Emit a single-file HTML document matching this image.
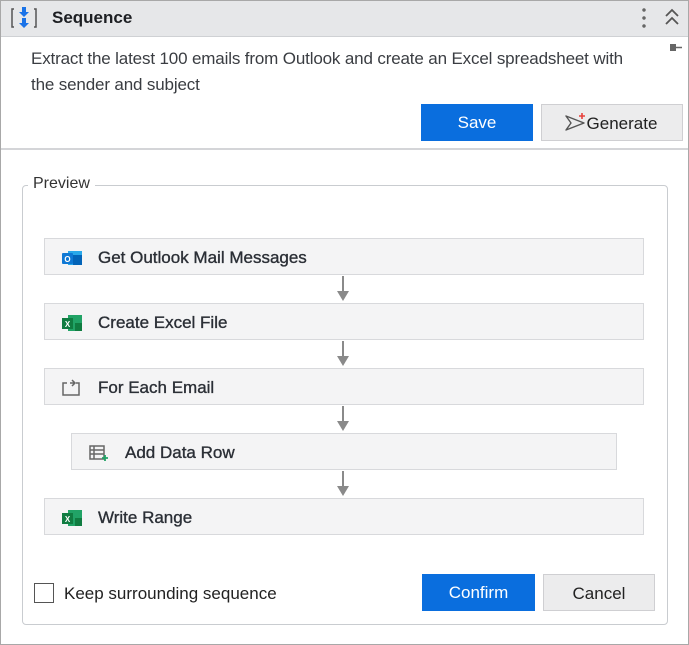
<!DOCTYPE html>
<html><head><style>
*{box-sizing:border-box;margin:0;padding:0}
body{width:689px;height:645px;background:#fff;font-family:"Liberation Sans",sans-serif;position:relative;overflow:hidden}
.abs{position:absolute}
.frame{left:0;top:0;width:689px;height:645px;border:1px solid #a8a8a8}
.hdr{left:1px;top:1px;width:687px;height:36px;background:#e6e7e9;border-bottom:1px solid #cfd1d4}
.step{position:absolute;height:37px;background:#f4f4f5;border:1px solid #d8d9dc;font-size:17px;color:#2b2f36;line-height:37px;padding-left:53px;-webkit-text-stroke:0.35px #2b2f36}
.step svg{position:absolute;left:16px;top:9px}
.arr{position:absolute;left:342px;width:2px;background:#8a8a8a}
.tri{position:absolute;left:337px;width:0;height:0;border-left:6px solid transparent;border-right:6px solid transparent;border-top:10px solid #8a8a8a}
.btn{position:absolute;height:37px;font-size:17px;text-align:center;line-height:37px}
</style></head><body>
<div class="abs frame"></div>
<div class="abs hdr"></div>
<svg class="abs" style="left:10px;top:6px" width="28" height="24" viewBox="0 0 28 24"><path d="M4 3H2v18h2M24 3h2v18h-2" stroke="#555" stroke-width="1.5" fill="none"/><path d="M12 1h4v5h3l-5 5-5-5h3z M12 12h4v5h3l-5 5-5-5h3z" fill="#1a73e8"/></svg>
<div class="abs" style="left:52px;top:8px;font-size:17px;font-weight:bold;color:#1d1f23">Sequence</div>
<div class="abs" style="left:642px;top:6px;width:4px;height:24px;background:radial-gradient(circle,#666 1.5px,transparent 2px) 0 0/4px 8px"></div>
<svg class="abs" style="left:664px;top:8px" width="16" height="18"><path d="M2 8l6-6 6 6M2 16l6-6 6 6" stroke="#555" stroke-width="1.8" fill="none"/></svg>
<svg class="abs" style="left:669px;top:42px" width="14" height="12"><rect x="1" y="2" width="6" height="7" fill="#666"/><path d="M7 5.5h6" stroke="#666" stroke-width="1.5"/></svg>
<div class="abs" style="left:31px;top:46px;width:634px;font-size:17px;line-height:26px;color:#3a3d42;letter-spacing:-0.15px">Extract the latest 100 emails from Outlook and create an Excel spreadsheet with<br>the sender and subject</div>
<div class="btn" style="left:421px;top:104px;width:112px;background:#0a6ede;color:#fff">Save</div>
<div class="btn" style="left:541px;top:104px;width:142px;background:#ececed;border:1px solid #cfcfd2;color:#222;padding-left:20px">Generate</div>
<svg class="abs" style="left:564px;top:112px" width="24" height="22"><path d="M2 4l18 7-18 7 5-7z" stroke="#555" stroke-width="1.4" fill="none" stroke-linejoin="round"/><path d="M18 1v6M15 4h6" stroke="#e8413c" stroke-width="1.6"/></svg>
<div class="abs" style="left:1px;top:148px;width:687px;height:2px;background:#d4d5d8"></div>
<div class="abs" style="left:22px;top:185px;width:646px;height:440px;border:1px solid #c9ccd0;border-radius:4px"></div>
<div class="abs" style="left:28px;top:175px;padding:0 5px;background:#fff;font-size:16px;color:#333">Preview</div>

<div class="step" style="left:44px;top:238px;width:600px">Get Outlook Mail Messages<svg width="22" height="20"><rect x="7" y="3" width="14" height="14" fill="#28a8ea"/><rect x="12" y="7" width="9" height="10" fill="#0364b8"/><rect x="1" y="5" width="11" height="11" rx="1" fill="#0f78d4"/><text x="6.5" y="14" font-size="8" fill="#fff" text-anchor="middle" font-family="Liberation Sans" font-weight="bold">O</text></svg></div>
<div class="arr" style="top:276px;height:16px"></div><div class="tri" style="top:291px"></div>
<div class="step" style="left:44px;top:303px;width:600px">Create Excel File<svg width="22" height="20"><rect x="7" y="2" width="14" height="16" fill="#21a366"/><rect x="14" y="10" width="7" height="8" fill="#107c41"/><rect x="1" y="5" width="11" height="11" fill="#107c41"/><text x="6.5" y="14" font-size="8" fill="#fff" text-anchor="middle" font-family="Liberation Sans" font-weight="bold">X</text></svg></div>
<div class="arr" style="top:341px;height:16px"></div><div class="tri" style="top:356px"></div>
<div class="step" style="left:44px;top:368px;width:600px">For Each Email<svg width="22" height="20"><path d="M6 5H2v12h16V5h-3M11 2l3 3-3 3M14 5H9" stroke="#666" stroke-width="1.5" fill="none"/></svg></div>
<div class="arr" style="top:406px;height:16px"></div><div class="tri" style="top:421px"></div>
<div class="step" style="left:71px;top:433px;width:546px">Add Data Row<svg width="22" height="20"><path d="M2 3h14v13H2zM2 7h14M2 11h14M6 3v13" stroke="#666" stroke-width="1.5" fill="none"/><path d="M17 12v6M14 15h6" stroke="#21a366" stroke-width="1.8"/></svg></div>
<div class="arr" style="top:471px;height:16px"></div><div class="tri" style="top:486px"></div>
<div class="step" style="left:44px;top:498px;width:600px">Write Range<svg width="22" height="20"><rect x="7" y="2" width="14" height="16" fill="#21a366"/><rect x="14" y="10" width="7" height="8" fill="#107c41"/><rect x="1" y="5" width="11" height="11" fill="#107c41"/><text x="6.5" y="14" font-size="8" fill="#fff" text-anchor="middle" font-family="Liberation Sans" font-weight="bold">X</text></svg></div>

<div class="abs" style="left:34px;top:583px;width:20px;height:20px;border:1.5px solid #555;background:#fff"></div>
<div class="abs" style="left:64px;top:584px;font-size:17px;color:#222">Keep surrounding sequence</div>
<div class="btn" style="left:422px;top:574px;width:113px;background:#0a6ede;color:#fff">Confirm</div>
<div class="btn" style="left:543px;top:574px;width:112px;background:#ececed;border:1px solid #cfcfd2;color:#222">Cancel</div>
</body></html>
